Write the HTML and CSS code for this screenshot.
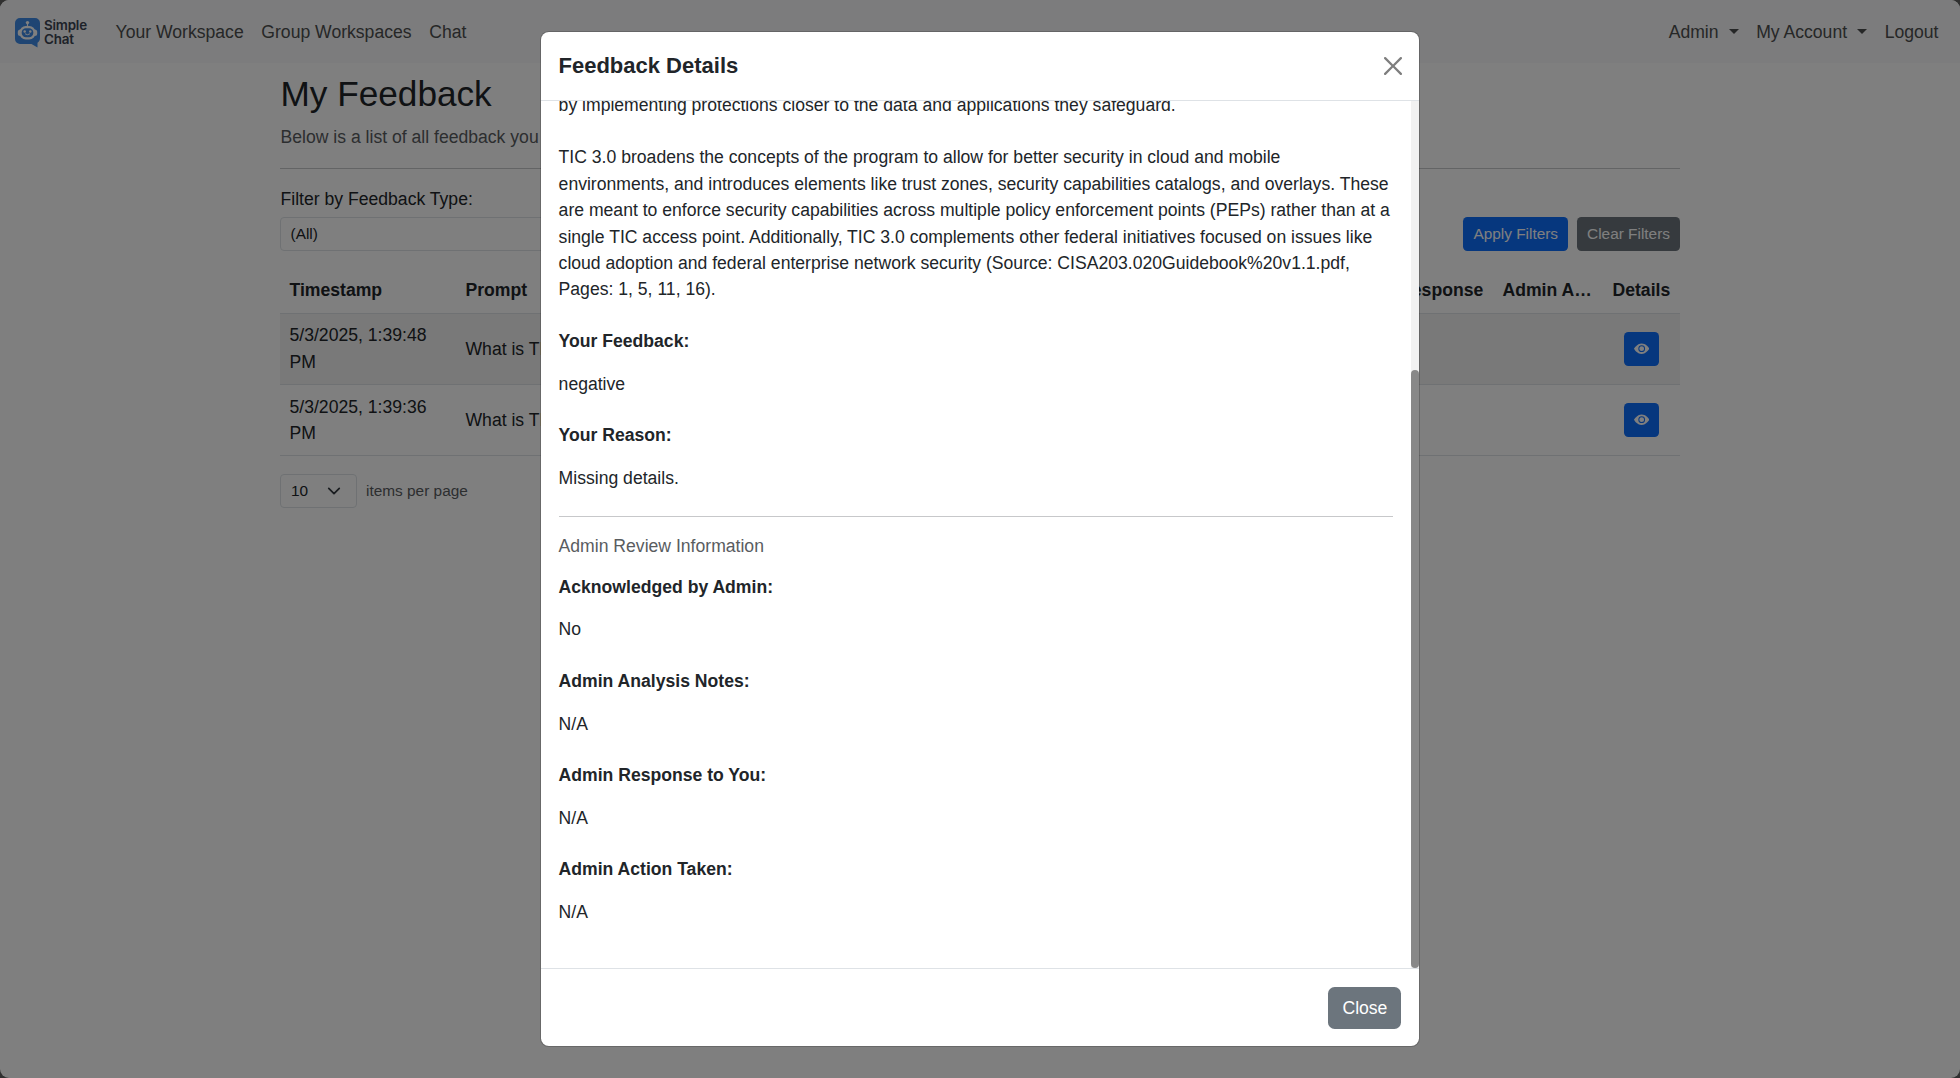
FILE: index.html
```html
<!DOCTYPE html>
<html lang="en">
<head>
<meta charset="utf-8">
<title>My Feedback - Simple Chat</title>
<link rel="stylesheet" href="styles.css">
</head>
<body>
<div class="page">
  <nav class="navbar">
    <a class="brand">
      <svg class="brand-mark" viewBox="0 0 25 31" width="25" height="31">
        <path fill="#3f8ae6" d="M5 1h15a5 5 0 0 1 5 5v15c0 2.500-1.200 4-2.500 4.800V30.500L16.500 27H5a5 5 0 0 1-5-5V6a5 5 0 0 1 5-5z"/>
        <circle cx="12.500" cy="5.600" r="1.700" fill="#fff"/>
        <path stroke="#fff" stroke-width="1.200" d="M12.500 6v4"/>
        <rect x="2.800" y="12.500" width="19.400" height="6.500" rx="2.500" fill="#fff"/>
        <rect x="4.700" y="9" width="15.600" height="13.500" rx="6" fill="#fff"/>
        <rect x="6.700" y="11.300" width="11.600" height="8.900" rx="4.200" fill="#3f8ae6"/>
        <circle cx="9.700" cy="14.500" r="1.200" fill="#fff"/>
        <circle cx="15.300" cy="14.500" r="1.200" fill="#fff"/>
        <path d="M10.300 17q2.200 1.700 4.400 0" stroke="#fff" stroke-width="1" fill="none" stroke-linecap="round"/>
      </svg>
      <span class="brand-name"><span>Simple</span><span>Chat</span></span>
    </a>
    <div class="nav-links">
      <a>Your Workspace</a><a>Group Workspaces</a><a>Chat</a>
    </div>
    <div class="nav-links nav-right">
      <a class="dropdown">Admin</a><a class="dropdown">My Account</a><a>Logout</a>
    </div>
  </nav>

  <main class="container">
    <h2>My Feedback</h2>
    <p class="intro">Below is a list of all feedback you have submitted.</p>
    <hr>
    <div class="filters">
      <div class="filter-field">
        <label>Filter by Feedback Type:</label>
        <div class="select filter-select">(All)</div>
      </div>
      <div class="filter-actions">
        <button class="btn btn-sm btn-primary">Apply Filters</button>
        <button class="btn btn-sm btn-secondary">Clear Filters</button>
      </div>
    </div>
    <table class="table">
      <colgroup><col class="c-time"><col><col class="c-resp"><col class="c-action"><col class="c-details"></colgroup>
      <thead>
        <tr><th>Timestamp</th><th>Prompt</th><th>Admin Response</th><th>Admin Action</th><th>Details</th></tr>
      </thead>
      <tbody>
        <tr class="odd"><td>5/3/2025, 1:39:48 PM</td><td>What is TIC 3.0?</td><td></td><td></td>
          <td class="details"><button class="btn btn-sm btn-primary btn-eye"><svg viewBox="0 0 16 16"><path d="M10.500 8a2.500 2.500 0 1 1-5 0 2.500 2.500 0 0 1 5 0"/><path d="M0 8s3-5.500 8-5.500S16 8 16 8s-3 5.500-8 5.500S0 8 0 8m8 3.500a3.500 3.500 0 1 0 0-7 3.500 3.500 0 0 0 0 7"/></svg></button></td></tr>
        <tr><td>5/3/2025, 1:39:36 PM</td><td>What is TIC 3.0?</td><td></td><td></td>
          <td class="details"><button class="btn btn-sm btn-primary btn-eye"><svg viewBox="0 0 16 16"><path d="M10.500 8a2.500 2.500 0 1 1-5 0 2.500 2.500 0 0 1 5 0"/><path d="M0 8s3-5.500 8-5.500S16 8 16 8s-3 5.500-8 5.500S0 8 0 8m8 3.500a3.500 3.500 0 1 0 0-7 3.500 3.500 0 0 0 0 7"/></svg></button></td></tr>
      </tbody>
    </table>
    <div class="pager">
      <div class="select page-size">10
        <svg viewBox="0 0 16 16"><path fill="none" stroke="#343a40" stroke-linecap="round" stroke-linejoin="round" stroke-width="2" d="m2 5 6 6 6-6"/></svg>
      </div>
      <span>items per page</span>
    </div>
  </main>
</div>

<div class="backdrop">
  <section class="modal">
    <header class="modal-header">
      <h5>Feedback Details</h5>
      <svg class="close-x" viewBox="0 0 16 16"><path d="M.293.293a1 1 0 0 1 1.414 0L8 6.586 14.293.293a1 1 0 1 1 1.414 1.414L9.414 8l6.293 6.293a1 1 0 0 1-1.414 1.414L8 9.414l-6.293 6.293a1 1 0 0 1-1.414-1.414L6.586 8 .293 1.707a1 1 0 0 1 0-1.414z"/></svg>
    </header>
    <div class="modal-scroll">
      <div class="modal-body">
        <p class="value">by implementing protections closer to the data and applications they safeguard.<br><br>TIC 3.0 broadens the concepts of the program to allow for better security in cloud and mobile environments, and introduces elements like trust zones, security capabilities catalogs, and overlays. These are meant to enforce security capabilities across multiple policy enforcement points (PEPs) rather than at a single TIC access point. Additionally, TIC 3.0 complements other federal initiatives focused on issues like cloud adoption and federal enterprise network security (Source: CISA203.020Guidebook%20v1.1.pdf, Pages: 1, 5, 11, 16).</p>
        <p class="label">Your Feedback:</p>
        <p class="value">negative</p>
        <p class="label">Your Reason:</p>
        <p class="value">Missing details.</p>
        <hr>
        <h6>Admin Review Information</h6>
        <p class="label">Acknowledged by Admin:</p>
        <p class="value">No</p>
        <p class="label">Admin Analysis Notes:</p>
        <p class="value">N/A</p>
        <p class="label">Admin Response to You:</p>
        <p class="value">N/A</p>
        <p class="label">Admin Action Taken:</p>
        <p class="value">N/A</p>
      </div>
      <div class="track"><div class="thumb"></div></div>
    </div>
    <footer class="modal-footer">
      <button class="btn btn-secondary">Close</button>
    </footer>
  </section>
</div>
</body>
</html>
```
FILE: styles.css
```css
* { box-sizing: border-box; }
html { background: #606060; }
body {
  margin: 0;
  height: 1078px;
  overflow: hidden;
  font: 17.6px/26.4px "Liberation Sans", Arial, sans-serif;
  color: #212529;
}
h2, h5, h6, p { margin: 0; }
.page {
  height: 1078px;
  background: #fff;
  border-radius: 9px;
  overflow: hidden;
}

/* Navigation */
.navbar {
  display: flex;
  align-items: center;
  height: 63px;
  padding: 2px 21.500px 0 15px;
  background: #f8f9fa;
}
.brand { display: flex; align-items: center; gap: 4px; width: 100.600px; }
.brand-name {
  display: flex;
  flex-direction: column;
  padding-bottom: 2px;
  font: 600 13.400px/14px Inter, "Open Sans", sans-serif;
  letter-spacing: -.2px;
  color: #3c4452;
}
.nav-links { display: flex; gap: 17.6px; color: #4d4e4f; }
.nav-right { margin-left: auto; }
.dropdown::after {
  content: "";
  display: inline-block;
  margin-left: 10px;
  vertical-align: 4.500px;
  border: 5px solid transparent;
  border-top-color: #4d4e4f;
  border-bottom: 0;
}

/* Feedback page */
.container { width: 1400px; margin: 0 auto; padding-top: 10px; }
h2 { padding-left: .5px; font-size: 35.2px; line-height: 42.2px; font-weight: 400; }
.intro { margin-top: 9px; padding-left: .5px; color: #595c5f; }
hr { margin: 17.6px 0; border: 0; border-top: 1px solid #c7c8ca; }
.container hr { margin-bottom: 16.400px; }
.filters { display: flex; justify-content: space-between; align-items: flex-end; }
.filter-field { width: 460px; }
.filter-field label { display: block; margin-bottom: 4.500px; padding-left: .5px; }
.select {
  height: 34px;
  padding: 0 10px;
  border: 1px solid #dee2e6;
  border-radius: 4px;
  font-size: 15.4px;
  line-height: 32px;
}
.filter-select { padding-left: 9.500px; }
.filter-actions { display: flex; gap: 9px; }
.btn {
  border: 0;
  border-radius: 6.600px;
  padding: 0 14px;
  height: 42px;
  color: #fff;
  font: 17.6px/42px "Liberation Sans", Arial, sans-serif;
}
.btn-sm { height: 34px; padding: 0 10px; border-radius: 4.400px; font-size: 15.4px; line-height: 34px; }
.btn-primary { background: #0d6efd; }
.btn-secondary { background: #6c757d; }
.table {
  width: 100%;
  margin-top: 18px;
  border-collapse: collapse;
  table-layout: fixed;
}
.c-time { width: 176px; }
.c-resp { width: 164px; }
.c-action { width: 110px; }
.c-details { width: 76px; }
th, td { padding: 8.800px 8.800px 8.800px 9.500px; border-bottom: 1px solid #dee2e6; text-align: left; vertical-align: middle; }
th { white-space: nowrap; overflow: hidden; text-overflow: ellipsis; }
th:nth-child(n+4) { padding-left: 8.500px; }
th:last-child { padding-right: 0; }
.odd { background: #f2f2f2; }
.details { padding-left: 20px; }
.btn-eye { display: block; width: 35px; }
.btn-eye svg { display: block; width: 15.4px; height: 15.4px; fill: #fff; }
.pager { display: flex; align-items: center; gap: 9px; margin-top: 18px; font-size: 15.4px; color: #595c5f; }
.page-size { display: flex; align-items: center; justify-content: space-between; width: 77px; padding-right: 15px; color: #212529; }
.page-size svg { width: 14px; height: 14px; }

/* Dialog */
.backdrop {
  position: absolute;
  inset: 0;
  display: flex;
  justify-content: center;
  align-items: center;
  background: rgba(0, 0, 0, .5);
}
.modal {
  display: flex;
  flex-direction: column;
  width: 880px;
  height: 1016px;
  background: #fff;
  background-clip: padding-box;
  border: 1px solid rgba(0, 0, 0, .18);
  border-radius: 8.800px;
  overflow: hidden;
}
.modal-header {
  display: flex;
  justify-content: space-between;
  align-items: center;
  height: 69px;
  padding: 0 17px 0 17.500px;
  border-bottom: 1px solid #dee2e6;
}
h5 { padding-bottom: 2px; font-size: 22px; line-height: 33px; }
.close-x { width: 18px; height: 18px; opacity: .5; }
.modal-scroll { flex: 1; min-height: 0; display: flex; }
.modal-body {
  flex: 1;
  display: flex;
  flex-direction: column;
  justify-content: flex-end;
  overflow: hidden;
  padding: 0 17.600px 17.600px;
}
.modal-body > * { flex: none; }
.modal-body hr { margin: 0 0 18.200px; }
h6 { margin-bottom: 17px; font-size: 17.6px; line-height: 21.1px; font-weight: 400; color: #595c5f; }
.label { margin-bottom: 16.300px; font-weight: 700; }
.value { margin-bottom: 25.100px; }
.track { display: flex; flex-direction: column; justify-content: flex-end; width: 8px; background: #f1f1f1; }
.thumb { height: 598px; border-radius: 4px; background: #888; }
.modal-footer {
  display: flex;
  justify-content: flex-end;
  align-items: center;
  height: 78px;
  padding-right: 17.600px;
  border-top: 1px solid #dee2e6;
}
```
